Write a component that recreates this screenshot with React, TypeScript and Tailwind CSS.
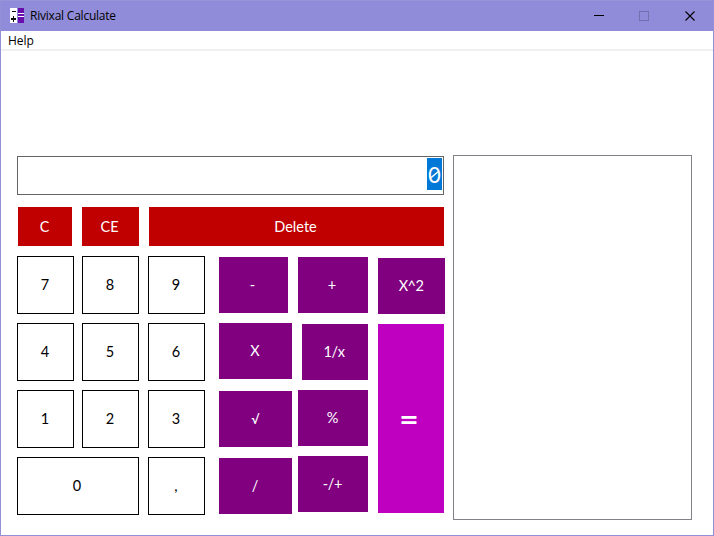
import React from "react";

type KeyProps = { label: string; box: string; text?: string };

const DIGIT =
  "flex items-center justify-center border border-black bg-white text-black h-[58px] shrink-0 pr-px";
const RED = "flex items-center justify-center bg-[#c00000] text-white h-[39px] shrink-0 pr-px pt-px";
const OP = "flex items-center justify-center bg-[#800080] text-white h-[56px] shrink-0 pr-px pt-px";

function Key({ label, box, text = "" }: KeyProps) {
  return (
    <button type="button" className={box}>
      <span className={`block leading-none ${text}`}>{label}</span>
    </button>
  );
}

function AppIcon() {
  return (
    <svg width="16" height="16" viewBox="0 0 16 16" shapeRendering="crispEdges">
      <rect x="1" width="7" height="15" fill="#fff" />
      <rect x="9" width="6" height="15" fill="#6a0dad" />
      <path d="M3 3h4v1H3zM2 10h5v2H2zM4 8h1v6H4z" fill="#111" />
      <path d="M9 5h6v1H9zM9 8h6v1H9z" fill="#fff" />
    </svg>
  );
}

export default function App() {
  return (
    <div className="flex h-[536px] w-[714px] flex-col overflow-hidden border border-t-0 border-[#9490d8] bg-white font-['Lato','Open_Sans',sans-serif] text-[14.5px] text-black">
      <header className="flex h-[31px] shrink-0 items-center border-t border-[#9894da] bg-[#918cd9] pl-2 font-['Open_Sans','Noto_Sans',sans-serif]">
        <AppIcon />
        <span className="ml-[5px] w-[87px] text-[12px] leading-none tracking-[-0.22px] whitespace-nowrap">
          Rivixal Calculate
        </span>
        <svg className="ml-auto mr-[17px]" width="103" height="12" viewBox="0 0 103 12" fill="none">
          <path d="M1 5.5h10" stroke="#000" />
          <rect x="46.5" y="1.5" width="9" height="9" stroke="#746fae" />
          <path d="M92.5 1.5l9 9M101.5 1.5l-9 9" stroke="#000" strokeWidth="1.1" />
        </svg>
      </header>
      <nav className="flex h-5 shrink-0 items-center border-b-2 border-[#f0f0f0] pl-[7px] pt-0.5 font-['Open_Sans','Noto_Sans',sans-serif] text-[12px] leading-none">
        Help
      </nav>

      <main className="flex pl-4 pt-[104px]">
        <section className="mt-px w-[428px] shrink-0">
          <div className="flex h-[39px] w-[427px] justify-end border border-[#646464] p-px">
            <span className="relative flex h-8 w-[15px] items-center justify-center bg-[#0078d7] pt-0.5 font-['Inter',sans-serif] text-[22px] leading-none text-white">
              0
              {/* Slash of the zero */}
              <svg className="absolute left-0 top-0" width="15" height="32" viewBox="0 0 15 32">
                <path d="M3 20.5L12 13" stroke="#fff" strokeWidth="1.6" />
              </svg>
            </span>
          </div>

          <div className="mt-3 flex pl-px">
            <Key label="C" box={`${RED} w-[54px]`} />
            <Key label="CE" box={`${RED} ml-2.5 w-[57px]`} text="pr-px" />
            <Key label="Delete" box={`${RED} ml-2.5 w-[295px]`} text="pr-px" />
          </div>

          <div className="mt-2.5 flex">
            <div className="grid grid-cols-[65px_66px_57px] gap-y-[9px]">
              <Key label="7" box={`${DIGIT} w-[57px]`} />
              <Key label="8" box={`${DIGIT} w-[57px]`} />
              <Key label="9" box={`${DIGIT} w-[57px]`} />
              <Key label="4" box={`${DIGIT} w-[57px]`} />
              <Key label="5" box={`${DIGIT} w-[57px]`} />
              <Key label="6" box={`${DIGIT} w-[57px]`} />
              <Key label="1" box={`${DIGIT} w-[57px]`} />
              <Key label="2" box={`${DIGIT} w-[57px]`} />
              <Key label="3" box={`${DIGIT} w-[57px]`} />
              <Key label="0" box={`${DIGIT} col-span-2 w-[122px]`} text="pr-px" />
              <Key label="," box={`${DIGIT} w-[57px]`} />
            </div>

            <div className="ml-3.5 flex flex-col pt-px">
              <div className="flex">
                <Key label="-" box={`${OP} w-[69px]`} text="pr-px" />
                <Key label="+" box={`${OP} ml-2.5 w-[70px]`} text="pr-px" />
                <Key label="X^2" box={`${OP} ml-2.5 mt-px w-[67px]`} text="tracking-[-0.6px]" />
              </div>
              <div className="mt-[9px] flex">
                <div className="flex w-[149px] flex-col">
                  <div className="flex justify-between">
                    <Key label="X" box={`${OP} w-[73px]`} />
                    <Key label="1/x" box={`${OP} mt-px w-[66px]`} text="pr-px tracking-[-0.3px]" />
                  </div>
                  <div className="mt-[10px] flex justify-between">
                    <Key
                      label="√"
                      box={`${OP} mt-px w-[73px]`}
                      text="font-['Open_Sans','DejaVu_Sans',sans-serif] text-[13px] font-semibold"
                    />
                    <Key label="%" box={`${OP} w-[70px]`} />
                  </div>
                  <div className="mt-[9px] flex justify-between">
                    <Key label="/" box={`${OP} mt-0.5 w-[73px]`} />
                    <Key label="-/+" box={`${OP} w-[70px]`} text="tracking-[-0.3px]" />
                  </div>
                </div>
                <button
                  type="button"
                  className="ml-2.5 mt-px flex h-[189px] w-[66px] items-center justify-center bg-[#c000c0] pr-[5px] text-[31px] font-bold leading-none text-white"
                >
                  <span className="block scale-x-[1.08]">=</span>
                </button>
              </div>
            </div>
          </div>
        </section>

        <aside className="ml-2 h-[365px] w-[239px] border border-[#828187] bg-white" />
      </main>
    </div>
  );
}
